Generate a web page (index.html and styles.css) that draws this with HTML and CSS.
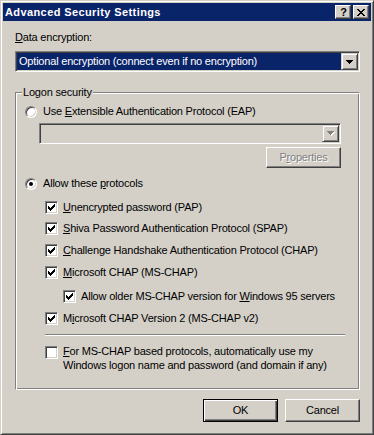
FILE: index.html
```html
<!DOCTYPE html>
<html>
<head>
<meta charset="utf-8">
<link rel="stylesheet" href="styles.css">
</head>
<body>
<div class="win">
  <div class="title">
    <span class="title-text">Advanced Security Settings</span>
    <div class="cap-btns">
      <div class="cap-btn help">?</div>
      <div class="cap-btn">
        <svg width="8" height="7" viewBox="0 0 8 7" shape-rendering="crispEdges"><path d="M0 0H2L4 2.5L6 0H8L5 3.5L8 7H6L4 4.5L2 7H0L3 3.5Z" fill="#000"/></svg>
      </div>
    </div>
  </div>
  <div class="body">
    <div class="label"><u>D</u>ata encryption:</div>
    <div class="combo">
      <div class="sel">Optional encryption (connect even if no encryption)</div>
      <div class="cbtn"><svg width="7" height="4" viewBox="0 0 7 4" shape-rendering="crispEdges"><path d="M0 0H7L3.5 4Z" fill="#000"/></svg></div>
    </div>
    <fieldset class="group">
      <legend class="legend">Logon security</legend>
      <div class="inner">
        <div class="row r-eap"><span class="radio"></span><span>Use <u>E</u>xtensible Authentication Protocol (EAP)</span></div>
        <div class="combo dis">
          <div class="sel"></div>
          <div class="cbtn"><svg width="8" height="5" viewBox="0 0 8 5" shape-rendering="crispEdges"><path d="M1 1H8L4.5 5Z" fill="#fff"/><path d="M0 0H7L3.5 4Z" fill="#808080"/></svg></div>
        </div>
        <div class="btn dis-btn props">P<u>r</u>operties</div>
        <div class="row r-allow"><span class="radio on"></span><span>Allow these <u>p</u>rotocols</span></div>
        <div class="row cbrow r1"><span class="cb chk"></span><span><u>U</u>nencrypted password (PAP)</span></div>
        <div class="row cbrow r2"><span class="cb chk"></span><span><u>S</u>hiva Password Authentication Protocol (SPAP)</span></div>
        <div class="row cbrow r3"><span class="cb chk"></span><span><u>C</u>hallenge Handshake Authentication Protocol (CHAP)</span></div>
        <div class="row cbrow r4"><span class="cb chk"></span><span><u>M</u>icrosoft CHAP (MS-CHAP)</span></div>
        <div class="row cbrow sub r5"><span class="cb chk"></span><span>Allow older MS-CHAP version for <u>W</u>indows 95 servers</span></div>
        <div class="row cbrow r6"><span class="cb chk"></span><span>M<u>i</u>crosoft CHAP Version 2 (MS-CHAP v2)</span></div>
        <div class="sep"></div>
        <div class="row cbrow multi"><span class="cb"></span><span class="mtext"><u>F</u>or MS-CHAP based protocols, automatically use my<br>Windows logon name and password (and domain if any)</span></div>
      </div>
    </fieldset>
    <div class="actions">
      <div class="btn default">OK</div>
      <div class="btn">Cancel</div>
    </div>
  </div>
</div>
</body>
</html>
```
FILE: styles.css
```css
html, body {
  margin: 0;
  padding: 0;
  background: #d4d0c8;
}

.win {
  width: 374px;
  height: 435px;
  box-sizing: border-box;
  border: 1px solid;
  border-color: #d4d0c8 #404040 #404040 #d4d0c8;
  box-shadow: inset 1px 1px #fff, inset -1px -1px #808080;
  padding: 2px;
  background: #d4d0c8;
  font: 11px "Liberation Sans", Arial, sans-serif;
  letter-spacing: -0.2px;
  color: #000;
  display: flex;
  flex-direction: column;
}

.title {
  height: 18px;
  flex: none;
  background: #0a246a;
  color: #fff;
  font-weight: bold;
  font-size: 11px;
  letter-spacing: 0.4px;
  display: flex;
  align-items: center;
  padding: 0 2px 0 2px;
}

.title-text {
  flex: 1;
  white-space: nowrap;
}

.cap-btns {
  display: flex;
  gap: 2px;
}

.cap-btn {
  width: 16px;
  height: 14px;
  box-sizing: border-box;
  border: 1px solid;
  border-color: #fff #404040 #404040 #fff;
  box-shadow: inset -1px -1px #808080;
  background: #d4d0c8;
  display: flex;
  align-items: center;
  justify-content: center;
  color: #000;
  letter-spacing: 0;
}

.cap-btn.help {
  font-weight: bold;
  font-size: 11px;
  line-height: 12px;
  padding-left: 1px;
}

.body {
  flex: 1;
  display: flex;
  flex-direction: column;
  padding: 0 11px 0 12px;
}

.label {
  margin-top: 10px;
  line-height: 13px;
}

.combo {
  margin-top: 7px;
  height: 21px;
  box-sizing: border-box;
  border: 1px solid;
  border-color: #808080 #fff #fff #808080;
  box-shadow: inset 1px 1px #404040, inset -1px -1px #d4d0c8;
  padding: 1px;
  display: flex;
  background: #fff;
}

.combo .sel {
  flex: 1;
  background: #0a246a;
  color: #fff;
  padding-left: 2px;
  line-height: 17px;
  white-space: nowrap;
  overflow: hidden;
}

.cbtn {
  width: 17px;
  flex: none;
  box-sizing: border-box;
  border: 1px solid;
  border-color: #d4d0c8 #404040 #404040 #d4d0c8;
  box-shadow: inset 1px 1px #fff, inset -1px -1px #808080;
  background: #d4d0c8;
  display: flex;
  align-items: center;
  justify-content: center;
}

.cbtn svg {
  display: block;
}

.combo.dis {
  background: #d4d0c8;
  margin: 5px 0 0 14px;
}

.combo.dis .sel {
  background: #d4d0c8;
}

.group {
  margin: 14px 0 0 0;
  padding: 0 18px 17px 9px;
  border: 1px solid;
  border-color: #808080 #fff #fff #808080;
  box-shadow: inset 1px 1px #fff, inset -1px -1px #808080;
  min-width: 0;
}

.legend {
  margin-left: -3px;
  padding: 0 1px;
  line-height: 13px;
  background: #d4d0c8;
}

.inner {
  display: flex;
  flex-direction: column;
}

.row {
  display: flex;
  align-items: center;
  gap: 5px;
  height: 13px;
  line-height: 13px;
  white-space: nowrap;
}

.r-eap { margin-top: 6px; }
.r-allow { margin-top: 9px; }
.cbrow { margin-left: 20px; }
.r1 { margin-top: 11px; }
.r2 { margin-top: 8px; }
.r3 { margin-top: 9px; }
.r4 { margin-top: 9px; }
.r5 { margin-top: 11px; margin-left: 38px; }
.r6 { margin-top: 9px; }

.radio {
  width: 12px;
  height: 12px;
  box-sizing: border-box;
  border-radius: 50%;
  border: 1px solid;
  border-color: #808080 #fff #fff #808080;
  box-shadow: inset 1px 1px #404040, inset -1px -1px #d4d0c8;
  background: #fff;
  flex: none;
  display: flex;
  align-items: center;
  justify-content: center;
  margin-right: 1px;
}

.radio.on::after {
  content: "";
  width: 4px;
  height: 4px;
  border-radius: 50%;
  background: #000;
}

.cb {
  width: 13px;
  height: 13px;
  box-sizing: border-box;
  border: 1px solid;
  border-color: #808080 #fff #fff #808080;
  box-shadow: inset 1px 1px #404040, inset -1px -1px #d4d0c8;
  background: #fff;
  flex: none;
}

.cb.chk {
  background: #fff url("data:image/svg+xml;utf8,<svg xmlns='http://www.w3.org/2000/svg' width='7' height='7' shape-rendering='crispEdges'><path fill='black' d='M6 0h1v1h-1zM5 1h2v1h-2zM0 2h1v1h-1zM4 2h3v1h-3zM0 3h2v1h-2zM3 3h3v1h-3zM0 4h5v1h-5zM1 5h3v1h-3zM2 6h1v1h-1z'/></svg>") no-repeat 2px 2px;
}

.sep {
  margin: 9px -4px 0 20px;
  border-top: 1px solid #808080;
  border-bottom: 1px solid #fff;
}

.multi {
  margin-top: 10px;
  height: auto;
  align-items: flex-start;
}

.mtext {
  line-height: 14px;
  margin-top: -2px;
}

.btn {
  width: 75px;
  height: 23px;
  box-sizing: border-box;
  border: 1px solid;
  border-color: #fff #404040 #404040 #fff;
  box-shadow: inset -1px -1px #808080;
  background: #d4d0c8;
  display: flex;
  align-items: center;
  justify-content: center;
  line-height: 13px;
}

.btn.default {
  border: 1px solid #000;
  box-shadow: inset 1px 1px #fff, inset -1px -1px #404040, inset -2px -2px #808080;
}

.props {
  height: 21px;
  margin-top: 3px;
  align-self: flex-end;
}

.dis-btn {
  color: #808080;
  text-shadow: 1px 1px 0 #fff;
}

.actions {
  margin-top: 9px;
  display: flex;
  justify-content: flex-end;
  gap: 7px;
}
```
